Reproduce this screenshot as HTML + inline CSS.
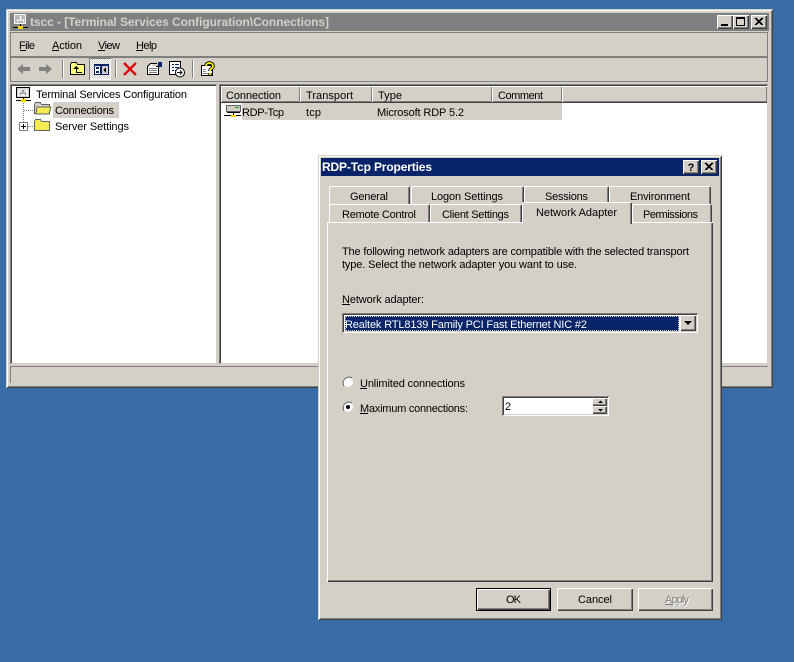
<!DOCTYPE html>
<html><head><meta charset="utf-8"><style>
html,body{margin:0;padding:0;width:794px;height:662px;overflow:hidden;background:#376ca6}
div{position:absolute;box-sizing:border-box}
.f{background:#d4d0c8}
.ra{box-shadow:inset 1px 1px #d4d0c8,inset -1px -1px #404040,inset 2px 2px #fff,inset -2px -2px #808080}
.rb{box-shadow:inset 1px 1px #fff,inset -1px -1px #404040,inset -2px -2px #808080}
.hd{box-shadow:inset 1px 1px #fff,inset -1px -1px #808080,0 1px #404040}
.su{box-shadow:inset 1px 1px #808080,inset -1px -1px #fff,inset 2px 2px #404040,inset -2px -2px #d4d0c8}
.et{box-shadow:inset 1px 1px #808080,inset -1px -1px #808080}
.tab{background:#d4d0c8;border-top:1px solid #fff;border-left:1px solid #fff;border-right:1px solid #404040;box-shadow:inset -1px 0 #808080;border-radius:2px 2px 0 0}
svg{position:absolute;left:0;top:0}
text{font-family:"Liberation Sans",sans-serif;font-size:11px;fill:#000;white-space:pre}
.b{font-weight:bold;font-size:12px}
.g{shape-rendering:crispEdges}
</style></head><body>
<!-- main window -->
<div class="f ra" style="left:6px;top:9px;width:767px;height:379px"></div>
<div style="left:10px;top:13px;width:759px;height:18px;background:#808080"></div>
<div class="f rb" style="left:717px;top:15px;width:16px;height:14px"></div>
<div class="f rb" style="left:733px;top:15px;width:16px;height:14px"></div>
<div class="f rb" style="left:751px;top:15px;width:16px;height:14px"></div>
<div class="f et" style="left:10px;top:32px;width:758px;height:25px"></div>
<div class="f et" style="left:10px;top:57px;width:758px;height:25px"></div>
<div style="left:10px;top:84px;width:207px;height:280px;background:#fff;box-shadow:inset 1px 1px #808080,inset -1px -1px #d4d0c8,inset 2px 2px #404040"></div>
<div style="left:219px;top:84px;width:549px;height:280px;background:#fff;box-shadow:inset 1px 1px #808080,inset -1px -1px #d4d0c8,inset 2px 2px #404040"></div>
<div class="f et" style="left:10px;top:366px;width:758px;height:17px;box-shadow:inset 1px 1px #808080"></div>
<!-- list header -->
<div class="f hd" style="left:221px;top:86px;width:79px;height:16px"></div>
<div class="f hd" style="left:300px;top:86px;width:72px;height:16px"></div>
<div class="f hd" style="left:372px;top:86px;width:120px;height:16px"></div>
<div class="f hd" style="left:492px;top:86px;width:70px;height:16px"></div>
<div class="f hd" style="left:562px;top:86px;width:205px;height:16px"></div>
<div class="f" style="left:242px;top:103px;width:320px;height:17px"></div>
<div class="f" style="left:53px;top:102px;width:66px;height:16px"></div>
<!-- toolbar pressed button -->
<div style="left:89px;top:58px;width:22px;height:22px;background:repeating-conic-gradient(#fff 0 25%,#d4d0c8 0 50%) 0 0/2px 2px;box-shadow:inset 1px 1px #808080,inset -1px -1px #fff"></div>
<!-- dialog -->
<div class="f ra" style="left:318px;top:155px;width:404px;height:465px"></div>
<div style="left:321px;top:158px;width:398px;height:18px;background:#0a246a"></div>
<div class="f rb" style="left:683px;top:160px;width:16px;height:14px"></div>
<div class="f rb" style="left:701px;top:160px;width:16px;height:14px"></div>
<!-- tabs -->
<div class="tab" style="left:329px;top:186px;width:81px;height:20px"></div>
<div class="tab" style="left:411px;top:186px;width:113px;height:20px"></div>
<div class="tab" style="left:524px;top:186px;width:85px;height:20px"></div>
<div class="tab" style="left:609px;top:186px;width:102px;height:20px"></div>
<div class="tab" style="left:329px;top:204px;width:101px;height:19px"></div>
<div class="tab" style="left:430px;top:204px;width:92px;height:19px"></div>
<div class="tab" style="left:632px;top:204px;width:80px;height:19px"></div>
<div class="f" style="left:327px;top:222px;width:386px;height:360px;box-shadow:inset 1px 1px #fff,inset -1px -1px #404040,inset -2px -2px #808080"></div>
<div class="tab" style="left:522px;top:202px;width:110px;height:22px"></div>
<!-- combo -->
<div style="left:342px;top:313px;width:356px;height:20px;background:#fff;box-shadow:inset 1px 1px #808080,inset -1px -1px #fff,inset 2px 2px #404040,inset -2px -2px #d4d0c8"></div>
<div style="left:345px;top:316px;width:334px;height:15px;background:#0a246a;outline:1px dotted #d4d0c8;outline-offset:-1px"></div>
<div class="f rb" style="left:680px;top:315px;width:16px;height:16px"></div>
<!-- spin -->
<div class="su" style="left:502px;top:396px;width:107px;height:20px;background:#fff"></div>
<div class="f rb" style="left:592px;top:398px;width:15px;height:8px"></div>
<div class="f rb" style="left:592px;top:406px;width:15px;height:8px"></div>
<!-- buttons -->
<div class="f" style="left:476px;top:588px;width:75px;height:23px;border:1px solid #000;box-shadow:inset 1px 1px #fff,inset -1px -1px #404040,inset -2px -2px #808080"></div>
<div class="f rb" style="left:557px;top:588px;width:76px;height:23px"></div>
<div class="f rb" style="left:638px;top:588px;width:75px;height:23px"></div>

<svg width="794" height="662" viewBox="0 0 794 662">
<!-- title text -->
<text class="b" x="30" y="26" textLength="299" style="fill:#d4d0c8">tscc - [Terminal Services Configuration\Connections]</text>
<text class="b" x="322" y="171" textLength="110" style="fill:#fff">RDP-Tcp Properties</text>
<g class="g" fill="none">
<!-- title icon -->
<path d="M14.500 14.500h11v9h-11z" fill="#b8b8b8" stroke="#fff"/>
<path d="M19.500 16.500h2M20.500 17v3M17.500 22v-2h6v2" stroke="#fff"/>
<path d="M20.500 24v3M13 27.500h15" stroke="#000"/>
<rect x="18" y="26" width="5" height="3" fill="#ffd800"/>
<!-- window buttons -->
<path d="M736.500 17.500h8v8h-8zM736 18.500h9" stroke="#000"/>
<path d="M755 18l7 7M756 18l7 7M762 18l-7 7M763 18l-7 7" stroke="#000"/>
<path d="M705 163l7 7M706 163l7 7M712 163l-7 7M713 163l-7 7" stroke="#000"/>
<!-- separators -->
<path d="M62.500 60v18M115.500 60v18M192.500 60v18" stroke="#808080"/>
<path d="M63.500 60v18M116.500 60v18M193.500 60v18" stroke="#fff"/>
</g>
<rect x="721" y="24" width="7" height="2"/>
<text x="691" y="171" text-anchor="middle" style="font-weight:bold;font-size:11px">?</text>
<!-- menu -->
<text x="19" y="49" textLength="16">File</text><rect x="20" y="50" width="6" height="1"/>
<text x="52" y="49" textLength="30">Action</text><rect x="52" y="50" width="7" height="1"/>
<text x="98" y="49" textLength="22">View</text><rect x="98" y="50" width="7" height="1"/>
<text x="136" y="49" textLength="21">Help</text><rect x="136" y="50" width="7" height="1"/>
<!-- toolbar icons -->
<path d="M17 69l6-5v3h7v4h-7v3z" fill="#808080"/>
<path d="M52 69l-6-5v3h-7v4h7v3z" fill="#808080"/>
<g class="g">
<path d="M70.500 74.500v-10l1-2h5l1 2h7v10z" fill="#ffff80" stroke="#000"/>
<path d="M73 69l3-3 3 3h-2v3h5v1h-6v-4z" fill="#000"/>
<rect x="94" y="64" width="15" height="11" fill="#0a246a"/>
<rect x="95" y="66" width="5" height="8" fill="#fff"/>
<rect x="102" y="66" width="6" height="8" fill="#d4d0c8"/>
<rect x="96" y="67" width="3" height="2" fill="#0a246a"/><rect x="96" y="71" width="3" height="2" fill="#0a246a"/>
<path d="M103 70l3-3v6z" fill="#000"/>
</g>
<path d="M124 63l12 12M136 63l-12 12" stroke="#e00000" stroke-width="2.300" fill="none"/>
<g class="g">
<path d="M147.500 66.500l3-3h6v3h2v8h-11z" fill="#fff" stroke="#000"/>
<path d="M149 68.500h8M149 70.500h8M149 72.500h8" stroke="#808080"/>
<path d="M151 65l4-1h3v2h-6z" fill="#d4d0c8"/>
<rect x="158" y="62" width="4" height="5" fill="#0a246a"/>
<path d="M169.500 61.500h11v13h-11z" fill="#fff" stroke="#000"/>
<path d="M172 64.500h2M175 64.500h4M172 67.500h2M175 67.500h4M172 70.500h2M175 70.500h2" stroke="#0a246a"/>
</g>
<circle cx="180" cy="72.500" r="4.500" fill="#fff" stroke="#000"/>
<path d="M177 72.500h5M180 70.500l2 2-2 2" stroke="#000" fill="none"/>
<g class="g"><path d="M201.500 65.500h11v10h-11z" fill="#fff" stroke="#000"/><path d="M203 69.500h3M203 71.500h3M203 73.500h7" stroke="#808080"/></g>
<path d="M206 66c0-4 7-4 7 0 0 3-3 2-3 5M210 73v2" fill="none" stroke="#000" stroke-width="3.500"/>
<path d="M206 66c0-4 7-4 7 0 0 3-3 2-3 5M210 73v2" fill="none" stroke="#ffff00" stroke-width="1.700"/>
<!-- tree -->
<g class="g" fill="none">
<path d="M16.500 87.500h13v10h-13z" fill="#d4d0c8" stroke="#000"/>
<path d="M18 89h10v7h-10z" fill="#eee"/>
<path d="M21.500 90.500h3M23 91v2M20.500 95v-2h5v2" stroke="#808080"/>
<path d="M23.500 98v3M16 100.500h15" stroke="#000"/>
<rect x="21" y="99" width="5" height="3" fill="#ffd800"/>
<path d="M23.500 103v19M24 110.500h10M28 126.500h6" stroke="#808080" stroke-dasharray="1 1"/>
<path d="M34.500 113.500v-9l1-2h5l1 2h8v9z" fill="#d4d0c8" stroke="#606060"/>
<path d="M37 107h14l-2 7h-13z" fill="#f4ec50" stroke="#606060"/>
<path d="M34.500 130.500v-9l1-2h5l1 2h8v9z" fill="#f4ec50" stroke="#606060"/>
<path d="M19.500 122.500h8v8h-8z" fill="#fff" stroke="#808080"/>
<path d="M21 126.500h5M23.500 124v5" stroke="#000"/>
<!-- list icon -->
<path d="M226.500 105.500h14v6h-14z" fill="#d4d0c8" stroke="#606060"/>
<rect x="235" y="107" width="4" height="1" fill="#00b000"/>
<path d="M227 112.500h13M224 115.500h17M233.500 113v3" stroke="#000"/>
<rect x="231" y="115" width="5" height="2" fill="#ffd800"/>
</g>
<text x="36" y="98" textLength="151">Terminal Services Configuration</text>
<text x="55" y="114" textLength="59">Connections</text>
<text x="55" y="130" textLength="74">Server Settings</text>
<!-- list -->
<text x="226" y="99" textLength="55">Connection</text>
<text x="306" y="99" textLength="47">Transport</text>
<text x="378" y="99" textLength="24">Type</text>
<text x="498" y="99" textLength="45">Comment</text>
<text x="242" y="116" textLength="42">RDP-Tcp</text>
<text x="306" y="116" textLength="15">tcp</text>
<text x="377" y="116" textLength="87">Microsoft RDP 5.2</text>
<!-- tabs -->
<text x="350" y="200" textLength="38">General</text>
<text x="431" y="200" textLength="72">Logon Settings</text>
<text x="545" y="200" textLength="43">Sessions</text>
<text x="630" y="200" textLength="60">Environment</text>
<text x="342" y="218" textLength="74">Remote Control</text>
<text x="442" y="218" textLength="67">Client Settings</text>
<text x="536" y="216" textLength="81">Network Adapter</text>
<text x="643" y="218" textLength="55">Permissions</text>
<!-- body -->
<text x="342" y="255" textLength="347">The following network adapters are compatible with the selected transport</text>
<text x="342" y="268" textLength="235">type. Select the network adapter you want to use.</text>
<text x="342" y="303" textLength="82">Network adapter:</text><rect x="342" y="304" width="8" height="1"/>
<text x="345" y="328" textLength="242" style="fill:#fff">Realtek RTL8139 Family PCI Fast Ethernet NIC #2</text>
<path d="M684 321h8l-4 4z"/>
<text x="360" y="387" textLength="105">Unlimited connections</text><rect x="360" y="388" width="7" height="1"/>
<text x="360" y="412" textLength="108">Maximum connections:</text><rect x="360" y="413" width="8" height="1"/>
<text x="505" y="410" textLength="7">2</text>
<!-- radios -->
<circle cx="348" cy="382" r="5.500" fill="#fff" stroke="#d4d0c8"/>
<path d="M344 386a5.800 5.800 0 0 1 8-8" stroke="#606060" fill="none"/>
<circle cx="348" cy="407" r="5.500" fill="#fff" stroke="#d4d0c8"/>
<path d="M344 411a5.800 5.800 0 0 1 8-8" stroke="#606060" fill="none"/>
<circle cx="348" cy="407" r="2"/>
<!-- spin arrows -->
<path d="M598 403h5l-2.500-2.500zM598 409h5l-2.500 2.500z"/>
<!-- buttons -->
<text x="506" y="603" textLength="15">OK</text>
<text x="578" y="603" textLength="34">Cancel</text>
<text x="666" y="604" textLength="24" style="fill:#fff">Apply</text>
<text x="665" y="603" textLength="24" style="fill:#808080">Apply</text>
<rect x="665" y="604" width="7" height="1" fill="#808080"/>
</svg>
</body></html>
